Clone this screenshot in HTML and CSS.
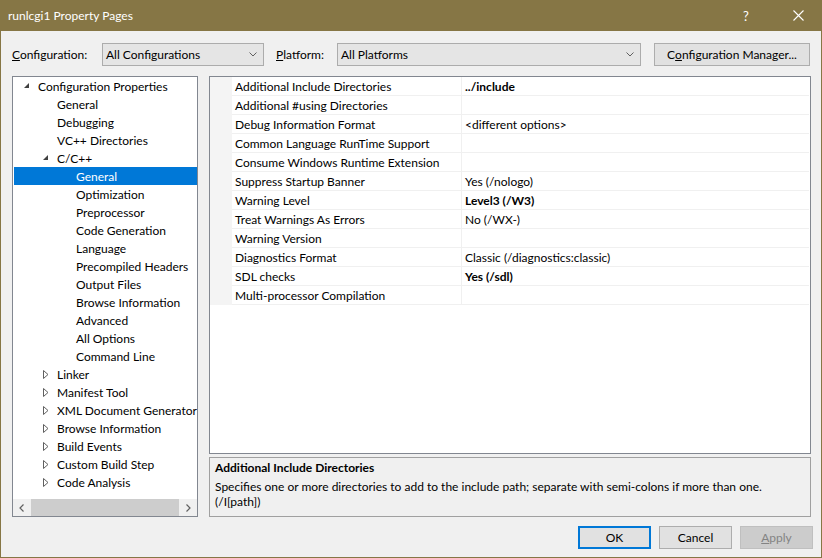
FILE: index.html
```html
<!DOCTYPE html>
<html>
<head>
<meta charset="utf-8">
<link rel="stylesheet" href="styles.css">
</head>
<body>
<div class="window">
  <div class="titlebar">
    <span class="title">runlcgi1 Property Pages</span>
    <div class="caption">
      <span class="cap cap-help">?</span>
      <span class="cap cap-close"><svg width="11" height="11" viewBox="0 0 11 11"><path d="M0.5 0.5L10.5 10.5M10.5 0.5L0.5 10.5" stroke="#fff" stroke-width="1.1" fill="none"/></svg></span>
    </div>
  </div>

  <div class="configrow">
    <span class="lbl lbl-config"><u>C</u>onfiguration:</span>
    <div class="combo combo-config"><span>All Configurations</span><svg class="chev" width="8" height="5" viewBox="0 0 8 5"><polyline points="0.5,0.5 4,4 7.5,0.5" fill="none" stroke="#606060" stroke-width="1"/></svg></div>
    <span class="lbl lbl-platform"><u>P</u>latform:</span>
    <div class="combo combo-platform"><span>All Platforms</span><svg class="chev" width="8" height="5" viewBox="0 0 8 5"><polyline points="0.5,0.5 4,4 7.5,0.5" fill="none" stroke="#606060" stroke-width="1"/></svg></div>
    <div class="btn btn-cfgmgr">C<u>o</u>nfiguration Manager...</div>
  </div>

  <div class="main">
    <div class="tree">
      <div class="tree-list">
        <div class="node l0"><span class="tw"><svg width="6" height="6" viewBox="0 0 6 6"><polygon points="5,0 5,5 0,5" fill="#404040"/></svg></span><span>Configuration Properties</span></div>
        <div class="node l1"><span class="tw"></span><span>General</span></div>
        <div class="node l1"><span class="tw"></span><span>Debugging</span></div>
        <div class="node l1"><span class="tw"></span><span>VC++ Directories</span></div>
        <div class="node l1"><span class="tw"><svg width="6" height="6" viewBox="0 0 6 6"><polygon points="5,0 5,5 0,5" fill="#404040"/></svg></span><span>C/C++</span></div>
        <div class="node l2 selected"><span class="tw"></span><span>General</span></div>
        <div class="node l2"><span class="tw"></span><span>Optimization</span></div>
        <div class="node l2"><span class="tw"></span><span>Preprocessor</span></div>
        <div class="node l2"><span class="tw"></span><span>Code Generation</span></div>
        <div class="node l2"><span class="tw"></span><span>Language</span></div>
        <div class="node l2"><span class="tw"></span><span>Precompiled Headers</span></div>
        <div class="node l2"><span class="tw"></span><span>Output Files</span></div>
        <div class="node l2"><span class="tw"></span><span>Browse Information</span></div>
        <div class="node l2"><span class="tw"></span><span>Advanced</span></div>
        <div class="node l2"><span class="tw"></span><span>All Options</span></div>
        <div class="node l2"><span class="tw"></span><span>Command Line</span></div>
        <div class="node l1"><span class="tw"><svg width="6" height="9" viewBox="0 0 6 9"><polygon points="0.5,0.5 5,4.5 0.5,8.5" fill="none" stroke="#606060" stroke-width="1"/></svg></span><span>Linker</span></div>
        <div class="node l1"><span class="tw"><svg width="6" height="9" viewBox="0 0 6 9"><polygon points="0.5,0.5 5,4.5 0.5,8.5" fill="none" stroke="#606060" stroke-width="1"/></svg></span><span>Manifest Tool</span></div>
        <div class="node l1"><span class="tw"><svg width="6" height="9" viewBox="0 0 6 9"><polygon points="0.5,0.5 5,4.5 0.5,8.5" fill="none" stroke="#606060" stroke-width="1"/></svg></span><span>XML Document Generator</span></div>
        <div class="node l1"><span class="tw"><svg width="6" height="9" viewBox="0 0 6 9"><polygon points="0.5,0.5 5,4.5 0.5,8.5" fill="none" stroke="#606060" stroke-width="1"/></svg></span><span>Browse Information</span></div>
        <div class="node l1"><span class="tw"><svg width="6" height="9" viewBox="0 0 6 9"><polygon points="0.5,0.5 5,4.5 0.5,8.5" fill="none" stroke="#606060" stroke-width="1"/></svg></span><span>Build Events</span></div>
        <div class="node l1"><span class="tw"><svg width="6" height="9" viewBox="0 0 6 9"><polygon points="0.5,0.5 5,4.5 0.5,8.5" fill="none" stroke="#606060" stroke-width="1"/></svg></span><span>Custom Build Step</span></div>
        <div class="node l1"><span class="tw"><svg width="6" height="9" viewBox="0 0 6 9"><polygon points="0.5,0.5 5,4.5 0.5,8.5" fill="none" stroke="#606060" stroke-width="1"/></svg></span><span>Code Analysis</span></div>
      </div>
      <div class="hscroll">
        <span class="sb-arrow"><svg width="5" height="8" viewBox="0 0 5 8"><polyline points="4.5,0.5 1,4 4.5,7.5" fill="none" stroke="#606060" stroke-width="1.2"/></svg></span>
        <span class="sb-track"><span class="sb-thumb"></span></span>
        <span class="sb-arrow"><svg width="5" height="8" viewBox="0 0 5 8"><polyline points="0.5,0.5 4,4 0.5,7.5" fill="none" stroke="#606060" stroke-width="1.2"/></svg></span>
      </div>
    </div>

    <div class="right">
      <div class="grid">
        <div class="row"><div class="margin"></div><div class="name">Additional Include Directories</div><div class="value bold">../include</div></div>
        <div class="row"><div class="margin"></div><div class="name">Additional #using Directories</div><div class="value"></div></div>
        <div class="row"><div class="margin"></div><div class="name">Debug Information Format</div><div class="value">&lt;different options&gt;</div></div>
        <div class="row"><div class="margin"></div><div class="name">Common Language RunTime Support</div><div class="value"></div></div>
        <div class="row"><div class="margin"></div><div class="name">Consume Windows Runtime Extension</div><div class="value"></div></div>
        <div class="row"><div class="margin"></div><div class="name">Suppress Startup Banner</div><div class="value">Yes (/nologo)</div></div>
        <div class="row"><div class="margin"></div><div class="name">Warning Level</div><div class="value bold">Level3 (/W3)</div></div>
        <div class="row"><div class="margin"></div><div class="name">Treat Warnings As Errors</div><div class="value">No (/WX-)</div></div>
        <div class="row"><div class="margin"></div><div class="name">Warning Version</div><div class="value"></div></div>
        <div class="row"><div class="margin"></div><div class="name">Diagnostics Format</div><div class="value">Classic (/diagnostics:classic)</div></div>
        <div class="row"><div class="margin"></div><div class="name">SDL checks</div><div class="value bold">Yes (/sdl)</div></div>
        <div class="row"><div class="margin"></div><div class="name">Multi-processor Compilation</div><div class="value"></div></div>
      </div>
      <div class="desc">
        <div class="desc-title">Additional Include Directories</div>
        <div class="desc-text">Specifies one or more directories to add to the include path; separate with semi-colons if more than one.<br>(/I[path])</div>
      </div>
    </div>
  </div>

  <div class="footer">
    <div class="btn btn-ok">OK</div>
    <div class="btn btn-cancel">Cancel</div>
    <div class="btn btn-apply"><u>A</u>pply</div>
  </div>
</div>
</body>
</html>
```

FILE: styles.css
```css
* { box-sizing: border-box; }
html, body { margin: 0; padding: 0; }
body {
  width: 822px;
  height: 558px;
  overflow: hidden;
  font-family: Lato, "Noto Sans", "Liberation Sans", sans-serif;
  font-size: 12px;
  color: #000;
  background: #f0f0f0;
}
.window {
  width: 822px;
  height: 558px;
  border: 1px solid #867645;
  border-top: 0;
  display: flex;
  flex-direction: column;
  background: #f0f0f0;
}
.titlebar {
  height: 31px;
  flex: none;
  background: #867645;
  color: #fff;
  display: flex;
  align-items: center;
  justify-content: space-between;
}
.title { padding-left: 7px; font-size: 12px; }
.caption { display: flex; height: 100%; }
.cap {
  width: 46px;
  display: flex;
  align-items: center;
  justify-content: center;
}
.cap-help { font-size: 13px; margin-right: 6px; }

.configrow {
  display: flex;
  align-items: center;
  height: 23px;
  margin-top: 12px;
  padding-left: 11px;
  flex: none;
}
.lbl-config { width: 90px; }
.lbl-platform { width: 61px; margin-left: 12px; }
.combo {
  height: 23px;
  border: 1px solid #acacac;
  background: #e5e5e5;
  display: flex;
  align-items: center;
  justify-content: space-between;
  padding: 0 6px 0 3px;
}
.combo-config { width: 162px; }
.combo-platform { width: 304px; }
.btn {
  height: 23px;
  border: 1px solid #adadad;
  background: #e1e1e1;
  display: flex;
  align-items: center;
  justify-content: center;
}
.btn-cfgmgr { width: 156px; margin-left: 13px; }

.main {
  display: flex;
  height: 441px;
  margin-top: 10px;
  padding-left: 11px;
  gap: 11px;
  flex: none;
}
.tree {
  width: 186px;
  border: 1px solid #828790;
  background: #fff;
  display: flex;
  flex-direction: column;
  padding: 0 0 0 1px;
}
.tree-list { flex: 1; overflow: hidden; padding-top: 1px; margin-top: -1px; }
.node {
  height: 18px;
  display: flex;
  align-items: center;
  white-space: nowrap;
}
.node.l0 { padding-left: 8px; }
.node.l1 { padding-left: 27px; }
.node.l2 { padding-left: 46px; }
.tw {
  width: 16px;
  flex: none;
  display: flex;
  align-items: center;
  padding-left: 2px;
}
.tw svg { display: block; }
.node.selected { background: #0078d7; color: #fff; }

.hscroll {
  height: 17px;
  margin-left: -1px;
  background: #f0f0f0;
  display: flex;
  flex: none;
}
.sb-arrow {
  width: 17px;
  display: flex;
  align-items: center;
  justify-content: center;
}
.sb-track { flex: 1; display: flex; padding: 0 1px; }
.sb-thumb { flex: 1; background: #cdcdcd; }

.right {
  width: 602px;
  display: flex;
  flex-direction: column;
  gap: 3px;
}
.grid {
  height: 378px;
  border: 1px solid #828790;
  background: #fff;
  padding-right: 1px;
}
.row {
  display: flex;
  height: 19px;
}
.margin { width: 22px; background: #f4f4f4; flex: none; }
.name, .value {
  border-bottom: 1px solid #f0f0f0;
  padding-left: 3px;
  display: flex;
  align-items: center;
  white-space: nowrap;
}
.name { width: 230px; border-right: 1px solid #f0f0f0; }
.value { flex: 1; }
.bold { font-weight: bold; }

.desc {
  flex: 1;
  border: 1px solid #a0a0a0;
  background: #f0f0f0;
  padding: 2px 5px;
}
.desc-title { font-weight: bold; line-height: 15px; margin-bottom: 4px; }
.desc-text { line-height: 15px; }

.footer {
  display: flex;
  justify-content: flex-end;
  gap: 8px;
  margin-top: 9px;
  padding-right: 8px;
}
.btn-ok, .btn-cancel, .btn-apply { width: 73px; }
.btn-ok { border: 2px solid #0078d7; }
.btn-apply { background: #cccccc; border-color: #bfbfbf; color: #838383; }
```
